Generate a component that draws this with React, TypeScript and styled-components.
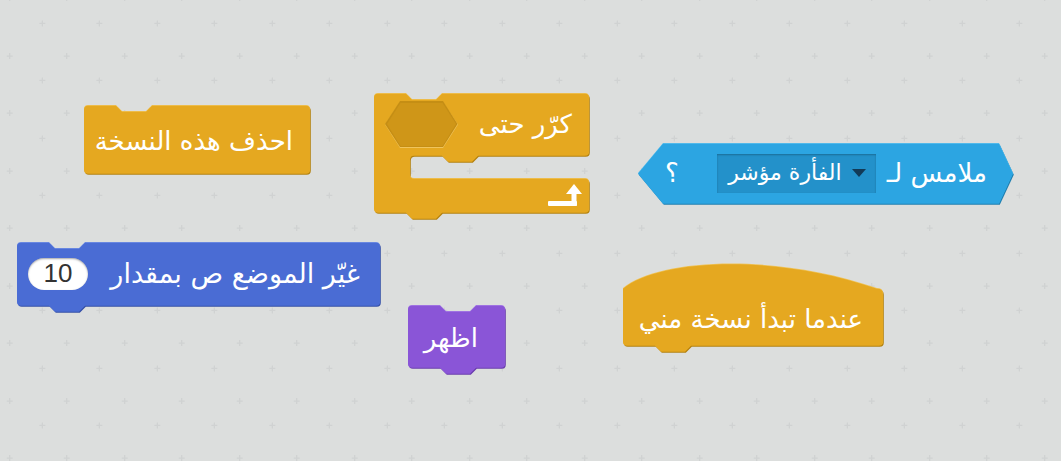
import React from 'react';
import styled, { createGlobalStyle } from 'styled-components';

const Global = createGlobalStyle`
  html, body { margin: 0; padding: 0; overflow: hidden; }
  body { font-family: "DejaVu Sans", "Noto Sans", sans-serif; background: #dcdedd; }
`;

const crossTile =
  "data:image/svg+xml;utf8," +
  encodeURIComponent(
    "<svg xmlns='http://www.w3.org/2000/svg' width='57.5' height='57.5' viewBox='0 0 57.5 57.5'>" +
      "<path d='M39 13.3h6M42 10.3v6M6.6 45.7h6M9.6 42.7v6' stroke='#d0d2d2' stroke-width='1.3' fill='none'/>" +
      "</svg>"
  );

const Workspace = styled.div`
  position: relative;
  width: 1061px;
  height: 461px;
  overflow: hidden;
  background-color: #dcdedd;
  background-image: url("${crossTile}");
  background-size: 57.5px 57.5px;
  background-position: 0 10px;
`;

const BlockRoot = styled.div<{ $x: number; $y: number; $w: number }>`
  position: absolute;
  left: ${(p) => p.$x}px;
  top: ${(p) => p.$y}px;
  width: ${(p) => p.$w}px;
`;

const Shape = styled.svg`
  position: absolute;
  left: 0;
  top: 0;
  overflow: visible;
`;

const Row = styled.div<{ $h: number; $pr: number; $pl?: number; $mt?: number }>`
  position: relative;
  display: flex;
  flex-direction: row;
  direction: rtl;
  align-items: center;
  height: ${(p) => p.$h}px;
  margin-top: ${(p) => p.$mt ?? 0}px;
  padding-right: ${(p) => p.$pr}px;
  padding-left: ${(p) => p.$pl ?? 0}px;
  box-sizing: border-box;
`;

const Label = styled.span<{ $size?: number }>`
  color: #ffffff;
  font-family: "DejaVu Sans", "Noto Sans", sans-serif;
  font-size: ${(p) => p.$size ?? 26}px;
  white-space: nowrap;
  line-height: 1;
  direction: rtl;
`;

const Slot = styled.span`
  display: flex;
  margin-right: auto;
`;

const NumberInput = styled.span`
  display: flex;
  align-items: center;
  justify-content: center;
  margin-right: auto;
  width: 60px;
  height: 32px;
  border-radius: 16px;
  background: #ffffff;
  box-shadow: inset 0 1px 2px rgba(0, 0, 0, 0.35);
  color: #333333;
  font-family: "Liberation Sans", Arial, sans-serif;
  font-size: 26px;
  direction: ltr;
`;

const Dropdown = styled.span`
  display: flex;
  flex-direction: row;
  direction: rtl;
  align-items: center;
  gap: 10px;
  margin-right: 11px;
  width: 159px;
  height: 39px;
  padding: 0 10px;
  box-sizing: border-box;
  overflow: hidden;
  background: #2391ca;
  box-shadow: inset 0 1px 2px rgba(0, 0, 0, 0.25);
`;

const Question = styled(Label)`
  margin-right: auto;
`;

const ArrowRow = styled.div`
  position: relative;
  display: flex;
  justify-content: flex-end;
  align-items: center;
  height: 34px;
  padding-right: 7px;
  margin-top: 23px;
`;

type Kind = 'stack' | 'cap' | 'hat';

const R = 4;

function bumpSeg(h: number, x0 = 0) {
  return `L${x0 + 68},${h} L${x0 + 62},${h + 6} L${x0 + 38},${h + 6} L${x0 + 32},${h} `;
}

function stackPath(w: number, h: number, kind: Kind, hat = 0) {
  let d = '';
  if (kind === 'hat') {
    d += `M0,${hat} C35,${hat - 29} 150,${hat - 36} ${w - 6},${hat} Q${w},${hat} ${w},${hat + 5} `;
  } else {
    d += `M0,${R} Q0,0 ${R},0 L32,0 L38,6 L62,6 L68,0 L${w - R},0 Q${w},0 ${w},${R} `;
  }
  const H = hat + h;
  d += `L${w},${H - R} Q${w},${H} ${w - R},${H} `;
  if (kind !== 'cap') d += bumpSeg(H);
  d += `L${R},${H} Q0,${H} 0,${H - R} Z`;
  return d;
}

function cPath(w: number, h1: number, h2: number, h3: number, wall: number) {
  const y2 = h1 + h2;
  const H = y2 + h3;
  return (
    `M0,${R} Q0,0 ${R},0 L32,0 L38,6 L62,6 L68,0 L${w - R},0 Q${w},0 ${w},${R} ` +
    `L${w},${h1 - R} Q${w},${h1} ${w - R},${h1} ` +
    `L${wall + 68},${h1} L${wall + 62},${h1 + 6} L${wall + 38},${h1 + 6} L${wall + 32},${h1} ` +
    `L${wall + R},${h1} Q${wall},${h1} ${wall},${h1 + R} L${wall},${y2 - R} Q${wall},${y2} ${wall + R},${y2} ` +
    `L${w - R},${y2} Q${w},${y2} ${w},${y2 + R} L${w},${H - R} Q${w},${H} ${w - R},${H} ` +
    bumpSeg(H) +
    `L${R},${H} Q0,${H} 0,${H - R} Z`
  );
}

function boolPath(w: number, h: number, inL: number, inR: number) {
  return `M${inL},0 L${w - inR},0 L${w},${h / 2} L${w - inR},${h} L${inL},${h} L0,${h / 2} Z`;
}

const BlockShape: React.FC<{ d: string; w: number; h: number; fill: string; dark: string; light: string }> = ({
  d,
  w,
  h,
  fill,
  dark,
  light,
}) => (
  <Shape width={w} height={h}>
    <path d={d} fill={dark} transform="translate(0.8,1.8)" />
    <path d={d} fill={light} />
    <path d={d} fill={fill} transform="translate(0,0.8)" />
  </Shape>
);

const ORANGE = { fill: '#e5a820', dark: '#b4820f', light: '#efc358' };
const BLUE = { fill: '#2ca5e2', dark: '#1f7fb0', light: '#5cc0ee' };
const MOTION = { fill: '#4a6cd4', dark: '#3550a8', light: '#7391e6' };
const PURPLE = { fill: '#8a55d7', dark: '#6a3cad', light: '#a67ce6' };

const HexInput = () => (
  <Slot>
    <svg width="73" height="47" viewBox="0 0 73 47">
      <path d="M15,1 L58,1 L73,23.5 L58,47 L15,47 L0,23.5 Z" fill="#f0c45c" />
      <path d="M15,0 L58,0 L72.5,23 L58,46 L15,46 L0,23 Z" fill="#c58e14" />
      <path d="M15.5,2 L57.5,2 L71,23 L57.5,45 L15.5,45 L2,23 Z" fill="#cf9618" />
    </svg>
  </Slot>
);

const LoopArrow = () => (
  <svg width="34" height="22" viewBox="0 0 34 22">
    <g fill="#ffffff">
      <rect x="0" y="17" width="29" height="5" rx="1" />
      <rect x="23.5" y="8" width="5" height="14" />
      <path d="M26,0 L34,10 L18,10 Z" />
    </g>
  </svg>
);

const Caret = () => (
  <svg width="14" height="8" viewBox="0 0 14 8" style={{ flex: 'none' }}>
    <path d="M0,0 L14,0 L7,8 Z" fill="#123a57" />
  </svg>
);

export default function App() {
  return (
    <>
      <Global />
      <Workspace>
        {/* delete this clone (cap) */}
        <BlockRoot $x={84} $y={105} $w={226}>
          <BlockShape d={stackPath(226, 68, 'cap')} w={226} h={70} {...ORANGE} />
          <Row $h={68} $pr={17} $mt={2}>
            <Label>احذف هذه النسخة</Label>
          </Row>
        </BlockRoot>

        {/* repeat until (C) */}
        <BlockRoot $x={374} $y={93} $w={215}>
          <BlockShape d={cPath(215, 62, 23, 34, 36)} w={215} h={125} {...ORANGE} />
          <Row $h={62} $pr={17} $pl={11}>
            <Label>كرّر حتى</Label>
            <HexInput />
          </Row>
          <ArrowRow>
            <LoopArrow />
          </ArrowRow>
        </BlockRoot>

        {/* touching mouse-pointer? (boolean) */}
        <BlockRoot $x={638} $y={143} $w={375}>
          <BlockShape d={boolPath(375, 60, 25, 14)} w={375} h={62} {...BLUE} />
          <Row $h={60} $pr={26} $pl={27}>
            <Label>ملامس لـ</Label>
            <Dropdown>
              <Caret />
              <Label $size={22}>الفأرة مؤشر</Label>
            </Dropdown>
            <Question>؟</Question>
          </Row>
        </BlockRoot>

        {/* change y by 10 */}
        <BlockRoot $x={17} $y={242} $w={363}>
          <BlockShape d={stackPath(363, 63, 'stack')} w={363} h={72} {...MOTION} />
          <Row $h={63} $pr={20} $pl={11}>
            <Label $size={27}>غيّر الموضع ص بمقدار</Label>
            <NumberInput>10</NumberInput>
          </Row>
        </BlockRoot>

        {/* show */}
        <BlockRoot $x={408} $y={305} $w={97}>
          <BlockShape d={stackPath(97, 62, 'stack')} w={97} h={70} {...PURPLE} />
          <Row $h={62} $pr={27} $mt={2}>
            <Label>اظهر</Label>
          </Row>
        </BlockRoot>

        {/* when I start as a clone (hat) */}
        <BlockRoot $x={623} $y={263} $w={260}>
          <BlockShape d={stackPath(260, 57, 'hat', 25)} w={260} h={90} {...ORANGE} />
          <Row $h={57} $pr={20} $mt={27}>
            <Label>عندما تبدأ نسخة مني</Label>
          </Row>
        </BlockRoot>
      </Workspace>
    </>
  );
}
